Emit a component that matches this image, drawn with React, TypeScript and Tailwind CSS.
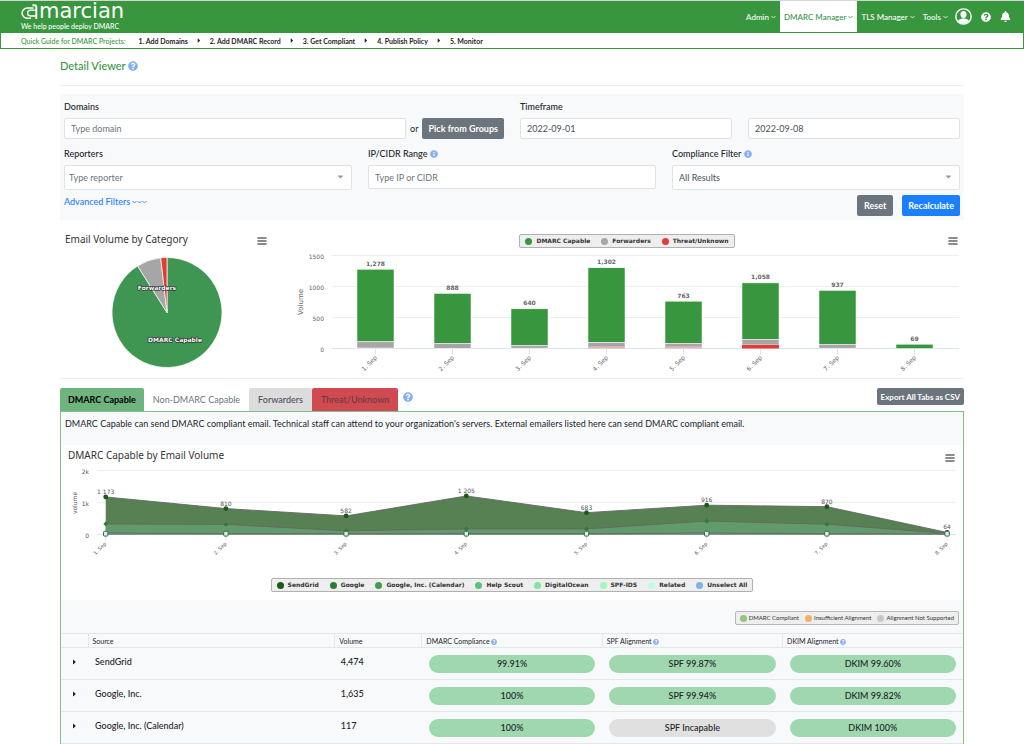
import React from 'react';
import { FaBell, FaCaretDown, FaCaretRight, FaInfoCircle, FaQuestionCircle } from 'react-icons/fa';

const DAYS = ['1. Sep', '2. Sep', '3. Sep', '4. Sep', '5. Sep', '6. Sep', '7. Sep', '8. Sep'];

const STEPS = ['1. Add Domains', '2. Add DMARC Record', '3. Get Compliant', '4. Publish Policy', '5. Monitor'];

const DAILY = [
    { label: '1,278', total: 1278, forwarders: 108, threat: 8 },
    { label: '888', total: 888, forwarders: 82, threat: 4 },
    { label: '640', total: 640, forwarders: 52, threat: 6 },
    { label: '1,302', total: 1302, forwarders: 98, threat: 24 },
    { label: '763', total: 763, forwarders: 84, threat: 24 },
    { label: '1,058', total: 1058, forwarders: 146, threat: 58 },
    { label: '937', total: 937, forwarders: 68, threat: 5 },
    { label: '69', total: 69, forwarders: 0, threat: 0 },
];

const AREA = [
    { label: '1 173', total: 1173, google: 330, other: 45 },
    { label: '810', total: 810, google: 315, other: 28 },
    { label: '582', total: 582, google: 115, other: 25 },
    { label: '1 205', total: 1205, google: 175, other: 25 },
    { label: '683', total: 683, google: 175, other: 25 },
    { label: '916', total: 916, google: 420, other: 45 },
    { label: '870', total: 870, google: 320, other: 25 },
    { label: '64', total: 64, google: 35, other: 20 },
];

const CATEGORY_LEGEND = [
    { label: 'DMARC Capable', color: '#38963f' },
    { label: 'Forwarders', color: '#a6a6a6' },
    { label: 'Threat/Unknown', color: '#e13c36' },
];

const SOURCE_LEGEND = [
    { label: 'SendGrid', color: '#1a5a1a' },
    { label: 'Google', color: '#2b7c38' },
    { label: 'Google, Inc. (Calendar)', color: '#439c56' },
    { label: 'Help Scout', color: '#5fc07e' },
    { label: 'DigitalOcean', color: '#82e3a0' },
    { label: 'SPF-IDS', color: '#9cfac0' },
    { label: 'Related', color: '#bdfde6' },
    { label: 'Unselect All', color: '#7cb5ec' },
];

const ROWS = [
    { source: 'SendGrid', volume: '4,474', dmarc: '99.91%', spf: 'SPF 99.87%', dkim: 'DKIM 99.60%' },
    { source: 'Google, Inc.', volume: '1,635', dmarc: '100%', spf: 'SPF 99.94%', dkim: 'DKIM 99.82%' },
    { source: 'Google, Inc. (Calendar)', volume: '117', dmarc: '100%', spf: 'SPF Incapable', dkim: 'DKIM 100%' },
];

const Chevron: React.FC = () => (
    <svg viewBox="0 0 5 4" className="w-[5px] h-1" fill="none" stroke="currentColor" strokeWidth={0.8}><path d="M0.5 1l2 2 2-2" /></svg>
);

const Logo: React.FC = () => (
    <a href="#" aria-label="dmarcian" className="flex h-[18px] items-end text-white">
        <svg viewBox="0 0 18 18" className="w-[18px] h-[18px]" fill="none" stroke="currentColor">
            <path d="M12.500 4H6.200a5.100 5.100 0 0 0 0 10.200H10" strokeWidth={1.500} />
            <path d="M15 6.200H9.500a2.900 2.900 0 0 0 0 5.800H15" strokeWidth={1.300} />
            <path d="M11.500 1.200h2q1.800 0 1.800 1.800v11.900" strokeWidth={1.900} />
        </svg>
        <span className="font-['DejaVu_Sans',sans-serif] text-[21px] leading-[22px]">marcian</span>
    </a>
);

const ChartMenu: React.FC = () => (
    <button type="button" aria-label="Chart menu" className="text-[#666]">
        <svg viewBox="0 0 10 8" className="w-[10px] h-2" stroke="currentColor" strokeWidth={1.6} strokeLinecap="round">
            <path d="M1 1h8M1 4h8M1 7h8" />
        </svg>
    </button>
);

const Legend: React.FC<{ items: { label: string; color: string }[] }> = ({ items }) => (
    <div className="flex h-[14px] items-center gap-[11px] rounded-xs border border-[#b0b0b0] bg-[#eee] px-[5px] font-['DejaVu_Sans',sans-serif] text-[6px] font-bold text-[#333]">
        {items.map((item) => (
            <button type="button" key={item.label} className="flex items-center gap-1 whitespace-nowrap">
                <span className="w-[7px] h-[7px] rounded-full" style={{ backgroundColor: item.color }} />
                {item.label}
            </button>
        ))}
    </div>
);

const PieChart: React.FC = () => {
    const cx = 107;
    const cy = 62.5;
    const r = 55;
    const point = (deg: number) => {
        const a = (deg * Math.PI) / 180;
        return `${cx + r * Math.sin(a)} ${cy - r * Math.cos(a)}`;
    };
    const slice = (from: number, to: number) =>
        `M${cx} ${cy}L${point(from)}A${r} ${r} 0 ${to - from > 180 ? 1 : 0} 1 ${point(to)}Z`;

    return (
        <svg viewBox="0 0 226 128" className="block w-full" stroke="#fff" strokeWidth={0.7} strokeLinejoin="round">
            <path d={slice(0, 327.7)} fill="#3f9552" />
            <path d={slice(327.7, 353.4)} fill="#a6a6a6" />
            <path d={slice(353.4, 360)} fill="#e13c36" />
            <g className="font-['DejaVu_Sans',sans-serif] text-[6px] font-bold" fill="#fff" stroke="#222" strokeWidth={1.2} paintOrder="stroke" textAnchor="middle">
                <text x="97" y="40">Forwarders</text>
                <text x="115" y="92">DMARC Capable</text>
            </g>
        </svg>
    );
};

const BarChart: React.FC = () => {
    const y = (v: number) => 98.5 - v * 0.062;

    return (
        <svg viewBox="0 0 678 128" className="block w-full font-['DejaVu_Sans',sans-serif] text-[6px]" fill="#666">
            {[0, 500, 1000, 1500].map((v) => (
                <g key={v}>
                    <path d={`M46 ${y(v)}H673`} stroke={v === 0 ? '#ccd6eb' : '#e6e6e6'} strokeWidth={0.7} />
                    <text x="38" y={y(v) + 3} textAnchor="end">{v}</text>
                </g>
            ))}
            <text transform="translate(17 52) rotate(-90)" textAnchor="middle" fontSize="7">Volume</text>
            {DAILY.map((d, i) => {
                const cx = 89.5 + i * 77;
                const left = cx - 18.5;
                return (
                    <g key={d.label}>
                        <path d={`M${cx} 98.5v6`} stroke="#ccd6eb" strokeWidth={0.7} />
                        <g stroke="#fff" strokeWidth={0.5}>
                            <rect x={left} y={y(d.total)} width="37" height={y(d.forwarders) - y(d.total)} fill="#38963f" />
                            {d.forwarders > 0 && <rect x={left} y={y(d.forwarders)} width="37" height={y(d.threat) - y(d.forwarders)} fill="#a6a6a6" />}
                        </g>
                        {d.threat > 10 && <rect x={left} y={y(d.threat)} width="37" height={98.5 - y(d.threat)} fill={d.threat > 40 ? '#e13c36' : '#eeb0b4'} />}
                        <text x={cx} y={y(d.total) - 3.5} textAnchor="middle" fontWeight="bold">{d.label}</text>
                        <text transform={`translate(${cx + 2} 108) rotate(-45)`} textAnchor="end">{DAYS[i]}</text>
                    </g>
                );
            })}
        </svg>
    );
};

const AreaChart: React.FC = () => {
    const x = (i: number) => 44.7 + i * 120.2;
    const y = (v: number) => 70.5 - v * 0.032;
    const line = (key: 'total' | 'google' | 'other') => AREA.map((d, i) => `${x(i)} ${y(d[key])}`).join('L');
    const area = (key: 'total' | 'google' | 'other') => `M${x(0)} 70.5L${line(key)}L${x(7)} 70.5Z`;

    return (
        <svg viewBox="0 0 902 110" className="block w-full font-['DejaVu_Sans',sans-serif] text-[6px]" fill="#555">
            {['0', '1k', '2k'].map((label, i) => (
                <g key={label}>
                    <path d={`M36 ${y(i * 1000)}H895`} stroke={i === 0 ? '#ccd6eb' : '#e6e6e6'} strokeWidth={0.7} />
                    <text x="28" y={y(i * 1000) + 3} textAnchor="end">{label}</text>
                </g>
            ))}
            <text transform="translate(16 39) rotate(-90)" textAnchor="middle">volume</text>
            <path d={area('total')} fill="#578053" />
            <path d={area('google')} fill="#619b6b" />
            <path d={area('other')} fill="#7d8f90" />
            <g fill="none" stroke="#666" strokeWidth={0.9}>
                <path d={`M${line('total')}`} />
                <path d={`M${line('google')}`} />
                <path d={`M${line('other')}`} />
            </g>
            {AREA.map((d, i) => (
                <g key={d.label}>
                    <path d={`M${x(i)} 70.5v6`} stroke="#ccd6eb" strokeWidth={0.7} />
                    <circle cx={x(i)} cy={y(d.total)} r="2.4" fill="#1a5a1a" />
                    <path d={`M${x(i)} ${y(d.google) - 2.4}l2.400 2.400-2.400 2.400-2.400-2.400z`} fill="#2b7c38" />
                    <rect x={x(i) - 2.2} y="67.3" width="4.4" height="4.8" rx="1" fill="#bdfde6" stroke="#555" strokeWidth={1} />
                    <text x={x(i)} y={y(d.total) - 3} textAnchor="middle">{d.label}</text>
                    <text transform={`translate(${x(i) + 1} 80) rotate(-45)`} textAnchor="end" fontSize="5">{DAYS[i]}</text>
                </g>
            ))}
        </svg>
    );
};

const Pill: React.FC<{ text: string }> = ({ text }) => (
    <div className={`h-[18px] rounded-full text-center leading-[18px] ${text === 'SPF Incapable' ? 'bg-[#e0e0e0]' : 'bg-[#9fd8af]'}`}>
        {text}
    </div>
);

const App: React.FC = () => {
    const input = 'w-full min-w-0 rounded-xs border border-[#dfe3e8] bg-white px-[6px] text-[#495057] placeholder:text-[#6c757d]';
    const greyButton = 'rounded-xs bg-[#6c757d] text-white font-bold';
    const help = 'text-[#85aef5]';
    const th = 'border-l border-[#e3e6ea] pl-1 text-left font-normal';
    const navLink = 'flex items-center gap-[2px] px-1';

    return (
        <div className="flex min-h-screen flex-col border-t border-[#d5d5d5] bg-white font-[Lato,sans-serif] text-[9px] leading-[12px] text-[#212529]">
            <header className="border-x border-b border-[#38963f]">
                <div className="flex h-8 items-start justify-between bg-[#38963f] pl-5 pr-3">
                    <div className="pt-[3px] text-white">
                        <Logo />
                        <p className="text-[7px] font-medium leading-[8px]">We help people deploy DMARC</p>
                    </div>
                    <nav className="flex h-[31px] items-center text-[8px] font-medium text-white">
                        <a href="#" className={navLink}>Admin <Chevron /></a>
                        <a href="#" className={`${navLink} h-full bg-white text-[#38963f]`}>DMARC Manager <Chevron /></a>
                        <a href="#" className={navLink}>TLS Manager <Chevron /></a>
                        <a href="#" className={navLink}>Tools <Chevron /></a>
                        <button type="button" aria-label="Account" className="ml-[3px]">
                            <svg viewBox="0 0 18 18" className="h-[17px] w-[17px]">
                                <circle cx="9" cy="9" r="8.1" fill="none" stroke="#fff" strokeWidth={1.5} />
                                <ellipse cx="9" cy="7" rx="3.2" ry="3.8" fill="#fff" />
                                <path d="M3 14c1-2.200 3.200-2.400 4.300-3h3.400c1.100.6 3.300.8 4.300 3a8 8 0 0 1-12 0z" fill="#fff" />
                            </svg>
                        </button>
                        <button type="button" aria-label="Help" className="ml-[9px]"><FaQuestionCircle className="h-[10px] w-[10px]" /></button>
                        <button type="button" aria-label="Notifications" className="ml-[9px]"><FaBell className="h-[11px] w-[11px]" /></button>
                    </nav>
                </div>
                <nav className="flex h-[15px] items-center pl-5 text-[7px] font-bold">
                    <span className="mr-[13px] font-medium text-[#38963f]">Quick Guide for DMARC Projects:</span>
                    {STEPS.map((step, i) => (
                        <React.Fragment key={step}>
                            {i > 0 && <FaCaretRight className="mx-[9px] h-[7px] w-1" />}
                            <a href="#">{step}</a>
                        </React.Fragment>
                    ))}
                </nav>
            </header>

            <main className="flex flex-1 flex-col px-[60px]">
                <div className="flex h-[37px] items-center gap-[2px] border-b border-[#eceeef] pb-[3px]">
                    <h1 className="text-[11px] leading-[16px] font-medium text-[#38963f]">Detail Viewer</h1>
                    <FaQuestionCircle className={`h-[10px] w-[10px] ${help}`} />
                </div>

                <form className="mt-2 bg-[#f8f9fb] px-1 pt-[7px] pb-1">
                    <div className="grid grid-cols-2 gap-4">
                        <div>
                            <label htmlFor="domains" className="block font-medium">Domains</label>
                            <div className="mt-[5px] flex h-[21px] items-center">
                                <input id="domains" placeholder="Type domain" className={`${input} h-full flex-1`} />
                                <span className="px-1">or</span>
                                <button type="button" className={`${greyButton} h-full px-[6px] whitespace-nowrap`}>Pick from Groups</button>
                            </div>
                        </div>
                        <div>
                            <label htmlFor="from" className="block font-medium">Timeframe</label>
                            <div className="mt-[5px] grid h-[21px] grid-cols-2 gap-4">
                                <input id="from" defaultValue="2022-09-01" className={input} />
                                <input aria-label="Timeframe end" defaultValue="2022-09-08" className={input} />
                            </div>
                        </div>
                    </div>
                    <div className="mt-[9px] grid grid-cols-3 gap-4">
                        <div>
                            <label htmlFor="reporters" className="block font-medium">Reporters</label>
                            <div className="relative mt-[5px]">
                                <select id="reporters" className="h-[25px] w-full appearance-none rounded-xs border border-[#dfe3e8] bg-white px-1 text-[#6c757d]">
                                    <option>Type reporter</option>
                                </select>
                                <FaCaretDown className="absolute top-[7px] right-[7px] h-[9px] w-[9px] text-[#999]" />
                            </div>
                        </div>
                        <div>
                            <label htmlFor="range" className="flex items-center gap-[3px] font-medium">IP/CIDR Range <FaInfoCircle className={`h-2 w-2 ${help}`} /></label>
                            <input id="range" placeholder="Type IP or CIDR" className={`${input} mt-[5px] block h-6`} />
                        </div>
                        <div>
                            <label htmlFor="compliance" className="flex items-center gap-[3px] font-medium">Compliance Filter <FaInfoCircle className={`h-2 w-2 ${help}`} /></label>
                            <div className="relative mt-[5px]">
                                <select id="compliance" className={`${input} h-[25px] appearance-none`}>
                                    <option>All Results</option>
                                </select>
                                <FaCaretDown className="absolute top-[7px] right-[7px] h-[9px] w-[9px] text-[#999]" />
                            </div>
                        </div>
                    </div>
                    <div className="mt-[5px] flex justify-between">
                        <a href="#" className="flex h-[14px] items-center gap-[2px] font-medium text-[#1a80ff]">
                            Advanced Filters
                            <span className="flex"><Chevron /><Chevron /><Chevron /></span>
                        </a>
                        <div className="flex h-[21px] gap-[9px]">
                            <button type="reset" className={`${greyButton} px-[7px]`}>Reset</button>
                            <button type="submit" className="rounded-xs bg-[#1a80ff] px-[6px] font-bold text-white">Recalculate</button>
                        </div>
                    </div>
                </form>

                <section className="grid grid-cols-4 border-b border-[#eceeef] pt-3">
                    <div>
                        <div className="flex h-[18px] items-center justify-between pr-[19px] pl-[5px]">
                            <h2 className="self-start font-['Noto_Sans',sans-serif] text-[10px] leading-[14px] whitespace-nowrap text-[#333]">Email Volume by Category</h2>
                            <ChartMenu />
                        </div>
                        <PieChart />
                    </div>
                    <div className="col-span-3">
                        <div className="flex h-[18px] items-center pr-[6px] pl-5">
                            <div className="flex flex-1 justify-center"><Legend items={CATEGORY_LEGEND} /></div>
                            <ChartMenu />
                        </div>
                        <BarChart />
                    </div>
                </section>

                <div className="mt-[9px] flex items-start">
                    <div role="tablist" className="flex h-[23px]">
                        <button type="button" role="tab" aria-selected="true" className="rounded-t-xs bg-[#6fb37f] px-2 font-bold text-black">DMARC Capable</button>
                        <button type="button" role="tab" className="px-[9px] text-[#6c757d]">Non-DMARC Capable</button>
                        <button type="button" role="tab" className="rounded-t-xs bg-[#dcdcdc] px-[9px] font-medium text-[#495057]">Forwarders</button>
                        <button type="button" role="tab" className="rounded-t-xs bg-[#d04a52] px-[9px] font-medium text-[#6b3a40]">Threat/Unknown</button>
                    </div>
                    <FaQuestionCircle className={`mt-1 ml-[5px] h-[10px] w-[10px] ${help}`} />
                    <button type="button" className={`${greyButton} ml-auto h-[17px] px-1 text-[8px]`}>Export All Tabs as CSV</button>
                </div>

                <section className="flex-1 border border-b-0 border-[#7fc08f] bg-[#f8f9fb]">
                    <p className="h-[33px] px-1 pt-[6px]">
                        DMARC Capable can send DMARC compliant email. Technical staff can attend to your organization's servers. External emailers listed here can send DMARC compliant email.
                    </p>
                    <div className="bg-white pb-2">
                        <div className="flex h-[19px] items-end justify-between pr-2 pb-[2px] pl-[7px]">
                            <h2 className="font-['Noto_Sans',sans-serif] text-[10px] leading-[14px] text-[#333]">DMARC Capable by Email Volume</h2>
                            <ChartMenu />
                        </div>
                        <AreaChart />
                        <div className="mt-[4px] flex justify-center"><Legend items={SOURCE_LEGEND} /></div>
                    </div>

                    <div className="flex justify-end pt-[11px] pr-1 pb-2">
                        <ul className="flex h-[14px] items-center gap-[6px] rounded-xs border border-[#b8b8b8] bg-[#eee] px-1 text-[6px] leading-[8px] text-[#333]">
                            <li className="flex items-center gap-[2px]"><span className="h-[7px] w-[7px] rounded-full bg-[#97c280]" />DMARC Compliant</li>
                            <li className="flex items-center gap-[2px]"><span className="h-[7px] w-[7px] rounded-full bg-[#f2b06e]" />Insufficient Alignment</li>
                            <li className="flex items-center gap-[2px]"><span className="h-[7px] w-[7px] rounded-full bg-[#c8c8c8]" />Alignment Not Supported</li>
                        </ul>
                    </div>

                    <table className="w-full table-fixed">
                        <thead>
                            <tr className="h-[14px] border-y border-[#e3e6ea] text-[7px] leading-[10px]">
                                <th aria-label="Expand" className="w-[27px]" />
                                <th className={th}>Source</th>
                                <th className={`${th} w-[87px]`}>Volume</th>
                                <th className={`${th} w-[20%]`}>DMARC Compliance <FaQuestionCircle className={`inline h-[6px] w-[6px] ${help}`} /></th>
                                <th className={`${th} w-[20%]`}>SPF Alignment <FaQuestionCircle className={`inline h-[6px] w-[6px] ${help}`} /></th>
                                <th className={`${th} w-[20%]`}>DKIM Alignment <FaQuestionCircle className={`inline h-[6px] w-[6px] ${help}`} /></th>
                            </tr>
                        </thead>
                        <tbody className="font-medium">
                            {ROWS.map((row) => (
                                <tr key={row.source} className="h-8 border-b border-[#e3e6ea]">
                                    <td className="pb-1 pl-[11px]">
                                        <button type="button" aria-label={`Expand ${row.source}`} className="block"><FaCaretRight className="h-2 w-[5px]" /></button>
                                    </td>
                                    <td className="pb-1 pl-[7px]">{row.source}</td>
                                    <td className="pb-1 pl-[6px]">{row.volume}</td>
                                    <td className="px-[7px]"><Pill text={row.dmarc} /></td>
                                    <td className="px-[7px]"><Pill text={row.spf} /></td>
                                    <td className="px-[7px]"><Pill text={row.dkim} /></td>
                                </tr>
                            ))}
                        </tbody>
                    </table>
                </section>
            </main>
        </div>
    );
};

export default App;
